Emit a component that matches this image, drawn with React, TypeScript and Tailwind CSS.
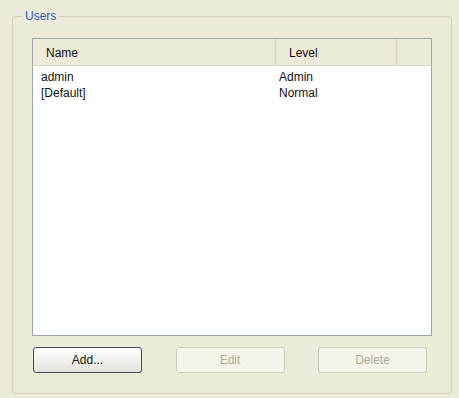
const users = [
  { name: 'admin', level: 'Admin' },
  { name: '[Default]', level: 'Normal' },
];

const XpButton = ({ label, disabled }: { label: string; disabled?: boolean }) => (
  <button
    disabled={disabled}
    className={
      disabled
        ? 'h-[26px] w-[109px] rounded-[3px] border border-[#cac8bb] bg-[#f5f4ea] text-[12px] text-[#aca899]'
        : 'h-[26px] w-[109px] rounded-[3px] border border-[#3c4d61] bg-gradient-to-b from-[#ffffff] to-[#e3e3db] text-[12px] text-[#111]'
    }
  >
    {label}
  </button>
);

export default function App() {
  return (
    <div
      className="w-[459px] h-[398px] bg-[#ecead9] pt-[9px] pl-[12px] pr-[10px] pb-[4px]"
      style={{ fontFamily: '"Liberation Sans", Arial, sans-serif' }}
    >
      <fieldset className="h-full rounded-[4px] border border-[#d2cfbd] px-[19px] pb-[20px]">
        <legend className="ml-[-10px] px-[3px] text-[12px] leading-[14px] text-[#2b5bbd]">Users</legend>
        <div className="mt-[15px] flex h-[298px] w-[400px] flex-col border border-[#9aa4b2] bg-white">
          <div className="flex h-[27px] items-center border-b border-[#d6d3c3] bg-[#ecead9] text-[12px] text-[#111]">
            <div className="flex h-full w-[243px] items-center border-r border-[#d0cdbd] pl-[13px] pt-[1px]">Name</div>
            <div className="flex h-full w-[121px] items-center border-r border-[#d0cdbd] pl-[13px] pt-[1px]">Level</div>
            <div className="flex-1" />
          </div>
          <div className="pt-[3px] text-[12px] leading-[16px] text-[#111]">
            {users.map(u => (
              <div key={u.name} className="flex">
                <div className="w-[246px] pl-[8px]">{u.name}</div>
                <div>{u.level}</div>
              </div>
            ))}
          </div>
        </div>
        <div className="mt-[11px] flex justify-between pl-[1px] pr-[5px]">
          <XpButton label="Add..." />
          <XpButton label="Edit" disabled />
          <XpButton label="Delete" disabled />
        </div>
      </fieldset>
    </div>
  );
}
